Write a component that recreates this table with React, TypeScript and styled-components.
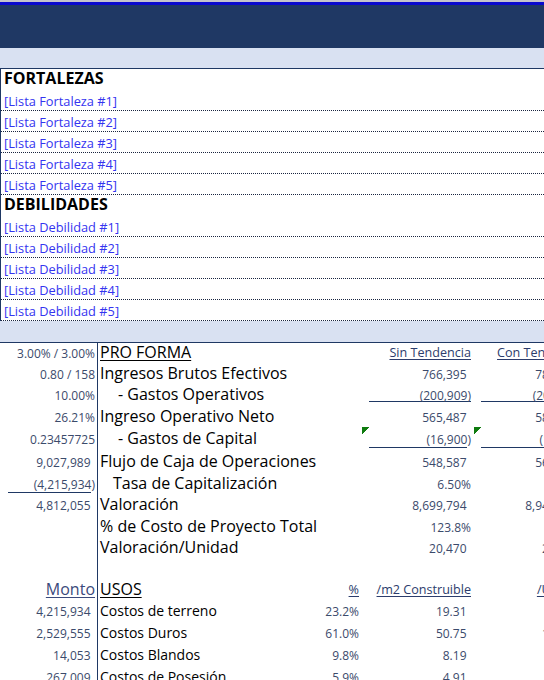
import React from 'react';
import styled, { createGlobalStyle, css } from 'styled-components';

const NAVY = '#1F3864';
const LAVENDER = '#D9E1F2';
const INK = '#3B4A6B';
const HEAD = '#2C3C6C';
const LINK = '#3434F0';
const FLAG = '#0F7B0F';
const FONT = '"Open Sans", "Noto Sans", "DejaVu Sans", sans-serif';

const GlobalStyle = createGlobalStyle`
  html, body { margin: 0; padding: 0; background: #fff; overflow: hidden; }
  body { font-family: ${FONT}; }
  #root { width: 544px; height: 680px; overflow: hidden; }
`;

const Sheet = styled.main`
  width: 544px;
  height: 680px;
  overflow: hidden;
  display: flex;
  flex-direction: column;
`;

const TitleBar = styled.header`
  flex: none;
  box-sizing: border-box;
  height: 48px;
  border-top: 2px solid #c4c4cc;
  background: linear-gradient(#0a0acd 0 3px, ${NAVY} 3px);
`;

const Band = styled.div<{ $h: number }>`
  flex: none;
  height: ${(p) => p.$h}px;
  background: ${LAVENDER};
`;

const SwotBox = styled.section`
  flex: none;
  border-top: 1px solid ${NAVY};
  border-left: 1px solid ${NAVY};
`;

const SwotTitle = styled.h2`
  margin: 0;
  box-sizing: border-box;
  height: 21px;
  display: flex;
  align-items: flex-end;
  padding: 0 0 4px 3px;
  font-size: 16px;
  font-weight: 700;
  line-height: 1;
  color: #000;
`;

const SwotItem = styled.div`
  box-sizing: border-box;
  height: 21px;
  display: flex;
  align-items: flex-end;
  padding: 0 0 2px 3px;
  border-bottom: 1px dotted #1a2540;
  font-size: 12.8px;
  line-height: 1;
  color: ${LINK};
`;

const Ledger = styled.section`
  flex: none;
  border-top: 1px solid ${NAVY};
`;

const Row = styled.div<{ $h: number }>`
  display: grid;
  grid-template-columns: 98px 202px 62px 112px 113px;
  width: 587px;
  height: ${(p) => p.$h}px;
`;

type Rule = { l: number; r: number; b?: number };
type Deco = { $rule?: Rule; $flag?: boolean };

const deco = ({ $rule, $flag }: Deco) => {
  const imgs: string[] = [];
  const sizes: string[] = [];
  const pos: string[] = [];
  if ($flag) {
    imgs.push(`linear-gradient(135deg, ${FLAG} 52%, transparent 52%)`);
    sizes.push('7px 7px');
    pos.push('0 1px');
  }
  if ($rule) {
    imgs.push(`linear-gradient(${NAVY}, ${NAVY})`);
    sizes.push(`calc(100% - ${$rule.l + $rule.r}px) 1px`);
    pos.push(`${$rule.l}px calc(100% - ${$rule.b ?? 0}px)`);
  }
  if (!imgs.length) return '';
  return `background-image: ${imgs.join(', ')}; background-size: ${sizes.join(
    ', '
  )}; background-position: ${pos.join(', ')}; background-repeat: no-repeat;`;
};

const cellBase = css<Deco>`
  box-sizing: border-box;
  display: flex;
  align-items: flex-end;
  white-space: pre;
  line-height: 1;
  padding-bottom: 2px;
  min-width: 0;
  ${deco}
`;

const KeyCell = styled.div<Deco & { $acct?: boolean }>`
  ${cellBase}
  justify-content: flex-end;
  border-right: 1px solid ${NAVY};
  padding-right: ${(p) => (p.$acct ? 6.5 : 2)}px;
  font-size: 12px;
  color: ${INK};
`;

const LabelCell = styled.div<{ $indent?: number; $size?: number }>`
  ${cellBase}
  padding-left: ${(p) => 2 + (p.$indent ?? 0)}px;
  font-size: ${(p) => p.$size ?? 16}px;
  color: #000;
`;

const ValueCell = styled.div<Deco & { $acct?: boolean }>`
  ${cellBase}
  justify-content: flex-end;
  padding-right: ${(p) => (p.$acct ? 7.5 : 3)}px;
  font-size: 12px;
  color: ${INK};
`;

const SectionTitle = styled.span`
  text-decoration: underline;
  text-decoration-thickness: 1px;
  text-underline-offset: 2px;
  color: #000;
`;

const ColHead = styled.span<{ $big?: boolean }>`
  font-size: ${(p) => (p.$big ? 16 : 12.6)}px;
  color: ${(p) => (p.$big ? '#3B4A7B' : HEAD)};
  text-decoration: underline;
  text-decoration-thickness: 1px;
  text-underline-offset: ${(p) => (p.$big ? 2 : 1.5)}px;
`;

type V = { t: string; acct?: boolean; rule?: Rule; flag?: boolean; head?: boolean; big?: boolean };
type L = { t: string; indent?: number; title?: boolean; size?: number };
type RowDef = { h: number; a?: V; b?: L; c?: V; d?: V; e?: V };

const rows: RowDef[] = [
  {
    h: 19,
    a: { t: '3.00% / 3.00%' },
    b: { t: 'PRO FORMA', title: true },
    d: { t: 'Sin Tendencia', head: true },
    e: { t: 'Con Tendencia', head: true },
  },
  {
    h: 21,
    a: { t: '0.80 / 158' },
    b: { t: 'Ingresos Brutos Efectivos' },
    d: { t: '766,395', acct: true },
    e: { t: '782,723', acct: true },
  },
  {
    h: 21,
    a: { t: '10.00%' },
    b: { t: '- Gastos Operativos', indent: 18 },
    d: { t: '(200,909)', rule: { l: 7, r: 3, b: 2 } },
    e: { t: '(204,927)', rule: { l: 7, r: 3, b: 2 } },
  },
  {
    h: 22,
    a: { t: '26.21%' },
    b: { t: 'Ingreso Operativo Neto' },
    d: { t: '565,487', acct: true },
    e: { t: '581,796', acct: true },
  },
  {
    h: 22,
    a: { t: '0.23457725' },
    b: { t: '- Gastos de Capital', indent: 18 },
    d: { t: '(16,900)', rule: { l: 7, r: 7 }, flag: true },
    e: { t: '(17,380)', rule: { l: 7, r: 7 }, flag: true },
  },
  {
    h: 23,
    a: { t: '9,027,989', acct: true },
    b: { t: 'Flujo de Caja de Operaciones' },
    d: { t: '548,587', acct: true },
    e: { t: '564,416', acct: true },
  },
  {
    h: 22,
    a: { t: '(4,215,934)', rule: { l: 8, r: 6 } },
    b: { t: 'Tasa de Capitalización', indent: 13 },
    d: { t: '6.50%' },
    e: { t: '6.50%' },
  },
  {
    h: 21,
    a: { t: '4,812,055', acct: true },
    b: { t: 'Valoración' },
    d: { t: '8,699,794', acct: true },
    e: { t: '8,946,400', acct: true },
  },
  {
    h: 22,
    b: { t: '% de Costo de Proyecto Total' },
    d: { t: '123.8%' },
    e: { t: '127.3%' },
  },
  {
    h: 21,
    b: { t: 'Valoración/Unidad' },
    d: { t: '20,470', acct: true },
    e: { t: '21,050', acct: true },
  },
  { h: 21 },
  {
    h: 21,
    a: { t: 'Monto', head: true, big: true },
    b: { t: 'USOS', title: true },
    c: { t: '%', head: true },
    d: { t: '/m2 Construible', head: true },
    e: { t: '/Unidad', head: true },
  },
  {
    h: 21,
    a: { t: '4,215,934', acct: true },
    b: { t: 'Costos de terreno', size: 14 },
    c: { t: '23.2%' },
    d: { t: '19.31', acct: true },
    e: { t: '9,920', acct: true },
  },
  {
    h: 22,
    a: { t: '2,529,555', acct: true },
    b: { t: 'Costos Duros', size: 14 },
    c: { t: '61.0%' },
    d: { t: '50.75', acct: true },
    e: { t: '11,906', acct: true },
  },
  {
    h: 22,
    a: { t: '14,053', acct: true },
    b: { t: 'Costos Blandos', size: 14 },
    c: { t: '9.8%' },
    d: { t: '8.19', acct: true },
    e: { t: '1,922', acct: true },
  },
  {
    h: 22,
    a: { t: '267,009', acct: true },
    b: { t: 'Costos de Posesión', size: 14 },
    c: { t: '5.9%' },
    d: { t: '4.91', acct: true },
    e: { t: '1,150', acct: true },
  },
];

const show = (v?: V) => {
  if (!v) return null;
  if (v.head) return <ColHead $big={v.big}>{v.t}</ColHead>;
  return v.t;
};

const Value = ({ v }: { v?: V }) => (
  <ValueCell $acct={v?.acct} $rule={v?.rule} $flag={v?.flag}>
    {show(v)}
  </ValueCell>
);

export default function App() {
  const items = [1, 2, 3, 4, 5];
  return (
    <>
      <GlobalStyle />
      <Sheet>
        <TitleBar />
        <Band $h={20} />
        <SwotBox>
          <SwotTitle>FORTALEZAS</SwotTitle>
          {items.map((n) => (
            <SwotItem key={`f${n}`}>[Lista Fortaleza #{n}]</SwotItem>
          ))}
          <SwotTitle>DEBILIDADES</SwotTitle>
          {items.map((n) => (
            <SwotItem key={`d${n}`}>[Lista Debilidad #{n}]</SwotItem>
          ))}
        </SwotBox>
        <Band $h={21} />
        <Ledger>
          {rows.map((r, i) => (
            <Row key={i} $h={r.h}>
              <KeyCell $acct={r.a?.acct} $rule={r.a?.rule}>
                {show(r.a)}
              </KeyCell>
              <LabelCell $indent={r.b?.indent} $size={r.b?.size}>
                {r.b ? r.b.title ? <SectionTitle>{r.b.t}</SectionTitle> : r.b.t : null}
              </LabelCell>
              <Value v={r.c} />
              <Value v={r.d} />
              <Value v={r.e} />
            </Row>
          ))}
        </Ledger>
      </Sheet>
    </>
  );
}
